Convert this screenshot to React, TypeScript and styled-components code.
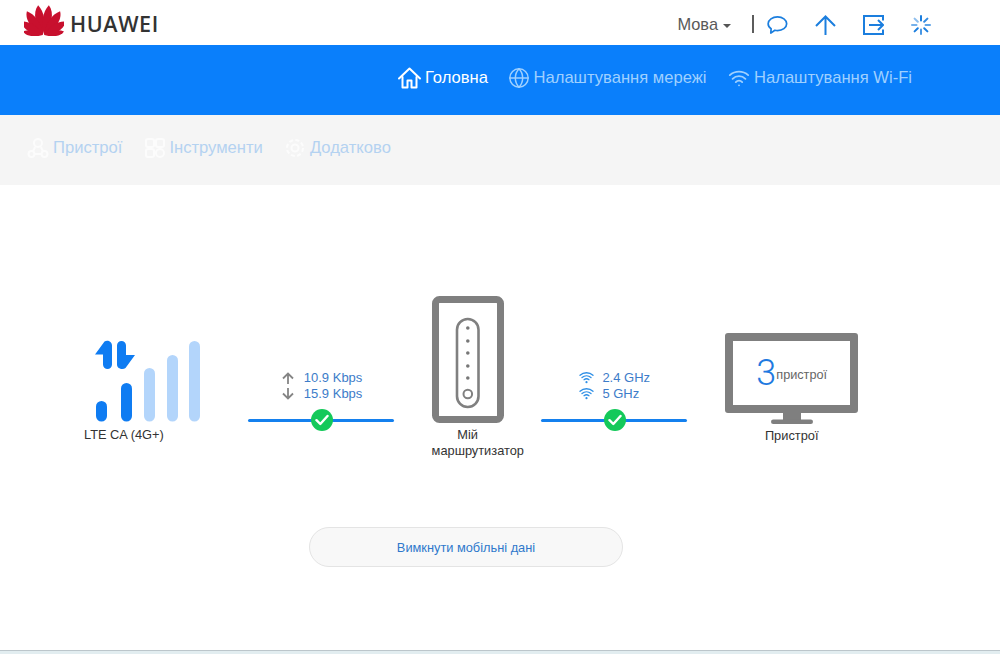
import React from "react";
import styled, { createGlobalStyle } from "styled-components";
import { Globe, Wifi } from "lucide-react";

const GlobalStyle = createGlobalStyle`
  html, body { margin: 0; padding: 0; background: #fff; }
  body { font-family: "Liberation Sans", Arial, sans-serif; }
  #root { min-height: 654px; }
`;

const Page = styled.div`
  display: flex;
  flex-direction: column;
  height: 654px;
  overflow: hidden;
`;

const Header = styled.header`
  display: flex;
  align-items: center;
  height: 45px;
  padding: 0 69px 0 24px;
  box-sizing: border-box;
`;

const Brand = styled.div`
  display: flex;
  align-items: center;
  gap: 6px;
  padding-bottom: 5px;
`;

const BrandName = styled.span`
  padding-top: 6px;
  font-family: "Open Sans", sans-serif;
  font-size: 21.5px;
  font-weight: 600;
  letter-spacing: 0.6px;
  color: #333;
`;

const HeaderTools = styled.div`
  display: flex;
  align-items: center;
  margin-left: auto;
  padding-top: 4px;
`;

const Lang = styled.span`
  display: flex;
  align-items: center;
  gap: 5px;
  font-size: 16.4px;
  color: #595959;
`;

const Caret = styled.i`
  width: 0;
  height: 0;
  margin-top: 2px;
  border-left: 4px solid transparent;
  border-right: 4px solid transparent;
  border-top: 4px solid #555;
`;

const Divider = styled.span`
  width: 2px;
  height: 18px;
  margin: -2px 13px 0 21px;
  background: #5c5c5c;
`;

const ToolIcons = styled.div`
  display: flex;
  align-items: center;
  gap: 27px;
  color: #1b7ede;
  svg { display: block; }
`;

const MainNav = styled.nav`
  display: flex;
  justify-content: flex-end;
  align-items: center;
  gap: 21.5px;
  height: 70px;
  padding: 0 88px 4px 0;
  box-sizing: border-box;
  background: #0a7ffb;
`;

const NavItem = styled.a<{ $active?: boolean }>`
  display: flex;
  align-items: center;
  gap: 4px;
  margin-right: ${(p) => (p.$active ? "-2px" : "0")};
  font-size: 16.6px;
  color: ${(p) => (p.$active ? "#fff" : "#9fd0ff")};
  svg { display: block; }
`;

const SubNav = styled.nav`
  display: flex;
  align-items: center;
  gap: 22.5px;
  height: 70px;
  padding: 0 0 4px 26.5px;
  box-sizing: border-box;
  background: #f5f5f5;
`;

const SubItem = styled.a`
  display: flex;
  align-items: center;
  gap: 4.5px;
  font-size: 16.6px;
  color: #b4d2f1;
  svg { display: block; }
`;

const Main = styled.main`
  flex: 1;
  display: flex;
  flex-direction: column;
  align-items: flex-start;
  padding-top: 111px;
`;

const Diagram = styled.div`
  display: flex;
  align-items: flex-start;
  gap: 37.8px;
  height: 231px;
  padding-left: 84px;
  box-sizing: border-box;
`;

const Signal = styled.div`
  width: 126px;
  padding-top: 44px;
  svg { display: block; margin: 0 0 5px 11px; }
`;

const Caption = styled.div`
  font-size: 12.8px;
  line-height: 16px;
  color: #333;
`;

const Link = styled.div`
  position: relative;
  width: 146px;
  padding-top: 73.5px;
`;

const Rates = styled.div<{ $icon: number; $gap: number; $indent: number }>`
  display: grid;
  grid-template-columns: ${(p) => p.$icon}px auto;
  justify-content: start;
  column-gap: ${(p) => p.$gap}px;
  padding-left: ${(p) => p.$indent}px;
  font-size: 13px;
  line-height: 16px;
  color: #3d7cc9;
  svg { display: block; align-self: center; }
`;

const Wire = styled.div`
  position: relative;
  height: 3px;
  margin-top: 17.5px;
  border-radius: 2px;
  background: #1480ee;
`;

const Check = styled.span`
  position: absolute;
  left: 63px;
  top: -10px;
  display: flex;
  align-items: center;
  justify-content: center;
  width: 22px;
  height: 22px;
  border-radius: 50%;
  background: #14c95a;
`;

const Router = styled.div`
  width: 72px;
  text-align: center;
  svg { display: block; margin-bottom: 4px; }
`;

const Monitor = styled.div`
  width: 133px;
  padding-top: 37px;
  text-align: center;
  svg { display: block; margin: 0 auto 4px; }
`;

const Screen = styled.div`
  display: flex;
  align-items: center;
  justify-content: center;
  height: 64px;
  border: 8px solid #7f7f7f;
  border-radius: 3px;
  background: #fff;
`;

const Count = styled.span`
  font-family: Roboto, sans-serif;
  font-size: 36px;
  font-weight: 300;
  line-height: 1;
  color: #1f7ae0;
`;

const CountLabel = styled.span`
  font-size: 12.7px;
  margin-top: 3px;
  color: #666;
`;

const ActionRow = styled.div`
  width: 100%;
  padding-left: 309px;
  box-sizing: border-box;
`;

const PillButton = styled.button`
  width: 314px;
  height: 40px;
  padding: 0;
  border: 1px solid #e4e4e4;
  border-radius: 20px;
  background: #f8f8f8;
  font-family: inherit;
  font-size: 12.8px;
  color: #2f78cc;
`;

const Footer = styled.footer`
  height: 4px;
  box-sizing: border-box;
  border-top: 1px solid #bcc6cb;
  background: #e2edf0;
`;

const petals: [number, number, number][] = [
  [-11, 30, 6],
  [-36, 28.5, 6],
  [-60, 25, 5.4],
  [-82, 20, 3.8],
  [11, 30, 6],
  [36, 28.5, 6],
  [60, 25, 5.4],
  [82, 20, 3.8],
];

const HuaweiLogo = () => (
  <svg width="40" height="32" viewBox="24 4 40 32">
    {petals.map(([angle, len, w]) => {
      // petals lean outward, the left half is a mirror of the right one
      const s = angle < 0 ? -1 : 1;
      return (
        <path
          key={angle}
          transform={`translate(${43.5 + s * 0.8} 35) rotate(${angle})`}
          d={`M0 0C${-s * w} ${-len * 0.35} ${-s * w} ${-len * 0.75} ${-s * w * 0.2} ${-len}C${s * w} ${-len * 0.8} ${s * w * 0.9} ${-len * 0.35} 0 0Z`}
          fill="#c8102e"
        />
      );
    })}
  </svg>
);

const ChatIcon = () => (
  <svg width="21" height="20" viewBox="0 0 22 20" fill="none" stroke="currentColor" strokeWidth="1.8" strokeLinejoin="round">
    <path d="M11 1.5c5.2 0 9.6 3.1 9.6 7.2S16.200 15.800 11 15.800c-1 0-1.900-.1-2.800-.3L4 18.500l.3-4.600C2.300 12.600 1.200 10.800 1.200 8.700 1.200 4.600 5.800 1.500 11 1.500Z" />
  </svg>
);

const UpIcon = () => (
  <svg width="21" height="20" viewBox="0 0 21 20" fill="none" stroke="currentColor" strokeWidth="2">
    <path d="M10.500 20V1.500M1 11 10.500 1.500 20 11" />
  </svg>
);

const ExitIcon = () => (
  <svg width="21" height="20" viewBox="0 0 21 20" fill="none" stroke="currentColor" strokeWidth="2">
    <path d="M20 5.500V1H1v18h19v-4.500" />
    <path d="M6 10h14M15 5l5 5-5 5" />
  </svg>
);

const SpinnerIcon = () => (
  <svg width="20" height="20" viewBox="0 0 20 20" stroke="currentColor" strokeWidth="2" strokeLinecap="round">
    <path d="M10 1v4.500" />
    <path d="M10 14.500V19" opacity=".8" />
    <path d="M1 10h4.500" opacity=".6" />
    <path d="M14.500 10H19" opacity=".7" />
    <path d="m3.600 3.600 3.200 3.200" opacity=".5" />
    <path d="m13.200 13.200 3.200 3.200" />
    <path d="m16.400 3.600-3.200 3.200" opacity=".9" />
    <path d="m6.800 13.200-3.200 3.200" />
  </svg>
);

const HomeIcon = () => (
  <svg width="23" height="22" viewBox="0 0 23 22" fill="none" stroke="#fff" strokeWidth="2" strokeLinejoin="round" strokeLinecap="round">
    <path d="M1 11.500 11.500 1.500 22 11.500" />
    <path d="M4.500 10v10.500h5v-7h4v7h5V10" />
  </svg>
);

const DevicesIcon = () => (
  <svg width="22" height="22" viewBox="0 0 22 22" fill="none" stroke="#fcfcfc" strokeWidth="2">
    <circle cx="11" cy="6" r="4" />
    <circle cx="4.500" cy="17" r="3" />
    <circle cx="17.500" cy="17" r="3" />
    <path d="m8 10-2 4.500M14 10l2 4.500M8 17h6" />
  </svg>
);

const ToolsIcon = () => (
  <svg width="20" height="20" viewBox="0 0 20 20" fill="none" stroke="#fcfcfc" strokeWidth="2">
    <rect x="1" y="1" width="8" height="8" rx="2" />
    <rect x="11" y="1" width="8" height="8" rx="2" />
    <rect x="1" y="11" width="8" height="8" rx="2" />
    <circle cx="15" cy="15" r="4" />
  </svg>
);

const GearIcon = () => (
  <svg width="20" height="20" viewBox="0 0 20 20" fill="none" stroke="#fcfcfc" strokeWidth="2">
    <circle cx="10" cy="10" r="3.500" />
    <circle cx="10" cy="10" r="8" strokeDasharray="4 2.300" />
  </svg>
);

const SignalIcon = () => (
  <svg width="106" height="82" viewBox="95 340 106 82">
    <g fill="#0f7cf2">
      <path d="M112 345.500v19a4.500 4.500 0 0 1-9 0V354.500h-8l9.500-13c2.500-2 7.500-.5 7.500 4Z" />
      <path d="M117 345.500a4.500 4.500 0 0 1 9 0V355h9l-9.500 13c-2.500 2-8.500 1-8.500-3.500Z" />
      <rect x="96" y="401" width="11" height="20.500" rx="5.500" />
      <rect x="121" y="383" width="11" height="38.500" rx="5.500" />
    </g>
    <g fill="#b3d5fb">
      <rect x="144" y="368" width="11" height="53.500" rx="5.500" />
      <rect x="167" y="355" width="11" height="66.500" rx="5.500" />
      <rect x="189" y="341" width="11" height="80.500" rx="5.500" />
    </g>
  </svg>
);

const UpArrow = ({ flip }: { flip?: boolean }) => (
  <svg
    width="12"
    height="12"
    viewBox="0 0 12 12"
    fill="none"
    stroke="#858585"
    strokeWidth="1.800"
    transform={flip ? "rotate(180)" : undefined}
  >
    <path d="M6 12V1.500M1 6.500l5-5 5 5" />
  </svg>
);

const WifiMini = () => (
  <svg width="15" height="13" viewBox="0 0 15 13" fill="none" stroke="#2e8fe6" strokeWidth="1.300" strokeLinecap="round">
    <path d="M1 4.200c3.700-3.300 9.300-3.300 13 0M3 6.500c2.600-2.200 6.400-2.200 9 0M5 8.700c1.500-1.100 3.500-1.100 5 0" />
    <circle cx="7.500" cy="11.200" r="1.100" fill="#2e8fe6" stroke="none" />
  </svg>
);

const CheckMark = () => (
  <svg width="14" height="12" viewBox="0 0 14 12" fill="none" stroke="#fff" strokeWidth="2.400" strokeLinecap="round" strokeLinejoin="round">
    <path d="M1.500 6.200 5.300 10l7.200-8" />
  </svg>
);

const RouterIcon = () => (
  <svg width="72" height="127" viewBox="432 296 72 127">
    <rect x="435.500" y="299.500" width="65" height="120" rx="4" fill="#fff" stroke="#7f7f7f" strokeWidth="7" />
    <rect x="457" y="319" width="21.500" height="88" rx="10.700" fill="none" stroke="#808080" strokeWidth="2.600" />
    <g fill="#777">
      {[328, 341, 353, 366, 378].map((y) => (
        <circle key={y} cx="467.800" cy={y} r="1.800" />
      ))}
    </g>
    <circle cx="467.800" cy="394" r="4.300" fill="none" stroke="#808080" strokeWidth="2" />
  </svg>
);

const MonitorStand = () => (
  <svg width="42" height="11" viewBox="0 0 42 11" fill="#7f7f7f">
    <rect x="12" y="0" width="18" height="8" />
    <rect x="0" y="6.500" width="42" height="4.500" rx="2.200" />
  </svg>
);

const App: React.FC = () => (
  <Page>
    <GlobalStyle />
    <Header>
      <Brand>
        <HuaweiLogo />
        <BrandName>HUAWEI</BrandName>
      </Brand>
      <HeaderTools>
        <Lang>
          Мова
          <Caret />
        </Lang>
        <Divider />
        <ToolIcons>
          <ChatIcon />
          <UpIcon />
          <ExitIcon />
          <SpinnerIcon />
        </ToolIcons>
      </HeaderTools>
    </Header>
    <MainNav>
      <NavItem $active>
        <HomeIcon />
        Головна
      </NavItem>
      <NavItem>
        <Globe size={22} strokeWidth={1.6} color="#9fd0ff" />
        Налаштування мережі
      </NavItem>
      <NavItem>
        <Wifi size={22} strokeWidth={2} color="#9fd0ff" />
        Налаштування Wi-Fi
      </NavItem>
    </MainNav>
    <SubNav>
      <SubItem>
        <DevicesIcon />
        Пристрої
      </SubItem>
      <SubItem>
        <ToolsIcon />
        Інструменти
      </SubItem>
      <SubItem>
        <GearIcon />
        Додатково
      </SubItem>
    </SubNav>
    <Main>
      <Diagram>
        <Signal>
          <SignalIcon />
          <Caption>LTE CA (4G+)</Caption>
        </Signal>
        <Link>
          <Rates $icon={12} $gap={10} $indent={34}>
            <UpArrow />
            <span>10.9 Kbps</span>
            <UpArrow flip />
            <span>15.9 Kbps</span>
          </Rates>
          <Wire>
            <Check>
              <CheckMark />
            </Check>
          </Wire>
        </Link>
        <Router>
          <RouterIcon />
          <Caption>Мій маршрутизатор</Caption>
        </Router>
        <Link>
          <Rates $icon={15} $gap={8} $indent={38}>
            <WifiMini />
            <span>2.4 GHz</span>
            <WifiMini />
            <span>5 GHz</span>
          </Rates>
          <Wire>
            <Check>
              <CheckMark />
            </Check>
          </Wire>
        </Link>
        <Monitor>
          <Screen>
            <Count>3</Count>
            <CountLabel>пристрої</CountLabel>
          </Screen>
          <MonitorStand />
          <Caption>Пристрої</Caption>
        </Monitor>
      </Diagram>
      <ActionRow>
        <PillButton>Вимкнути мобільні дані</PillButton>
      </ActionRow>
    </Main>
    <Footer />
  </Page>
);

export default App;
